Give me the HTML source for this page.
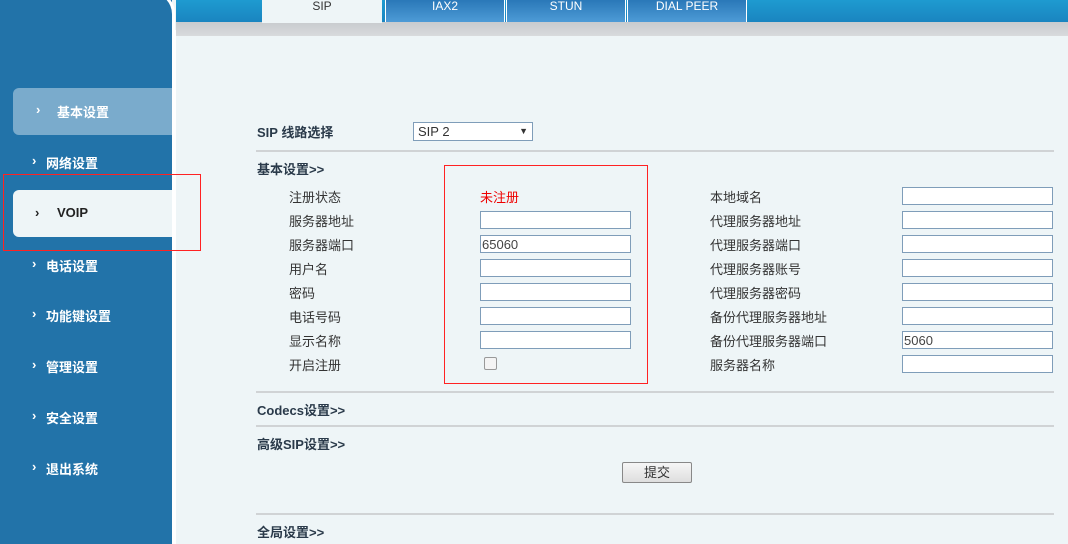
<!DOCTYPE html>
<html><head><meta charset="utf-8"><style>
body{margin:0;width:1068px;height:544px;overflow:hidden;background:#eef5f7;font-family:"Liberation Sans","Noto Sans CJK SC",sans-serif;font-size:13px;color:#333;position:relative}
.abs{position:absolute}
#side{left:0;top:0;width:172px;height:544px;background:#2273a9}
#topbar{left:176px;top:0;width:892px;height:22px;background:linear-gradient(#1e9bd0,#1a85c0)}
#gray{left:176px;top:22px;width:892px;height:14px;background:linear-gradient(#c8cbce,#d8dadc)}
.tab{top:0;height:22px;width:118px;text-align:center;font-size:12px;color:#fff;line-height:12px;background:linear-gradient(#2a78b8,#4d9bd6);border-left:1px solid #fff;border-right:1px solid #fff}
.nav{left:0;width:172px;color:#fff;font-weight:bold;font-size:13px}
.hr{left:256px;width:798px;height:2px;background:#d0d3d5}
.b{font-weight:bold;color:#2a3a4a}
input.t{position:absolute;width:148px;height:16px;border:1px solid #7f9db9;background:#fff;margin:0;padding:0 0 0 1px;font:13px "Liberation Sans",sans-serif;color:#444}
.l{position:absolute;font-size:13px;color:#333}
</style></head><body>
<div class="abs" id="topbar"></div>
<div class="abs" id="gray"></div>
<div class="abs tab" style="left:262px;background:#eef5f7;color:#333;border:none;width:120px;height:23px;padding-top:0">SIP</div>
<div class="abs tab" style="left:385px">IAX2</div>
<div class="abs tab" style="left:506px">STUN</div>
<div class="abs tab" style="left:627px">DIAL PEER</div>
<div class="abs" id="side"></div>
<div class="abs" style="left:140px;top:-10px;width:32px;height:48px;border-top-right-radius:24px;border-right:3px solid #fff;border-top:3px solid #fff"></div>
<div class="abs" style="left:172px;top:30px;width:4px;height:514px;background:#fff"></div>
<div class="abs" style="left:13px;top:88px;width:159px;height:47px;background:#7aabcc;border-radius:6px 0 0 6px"></div>
<div class="abs" style="left:13px;top:190px;width:159px;height:47px;background:#eef5f7;border-radius:6px 0 0 6px"></div>
<div class="abs" style="left:3px;top:174px;width:196px;height:75px;border:1px solid #f22"></div>
<div class="abs nav" style="top:102px"><span style="position:absolute;left:36px">›</span><span style="position:absolute;left:57px">基本设置</span></div>
<div class="abs nav" style="top:153px"><span style="position:absolute;left:32px">›</span><span style="position:absolute;left:46px">网络设置</span></div>
<div class="abs nav" style="top:205px;color:#222"><span style="position:absolute;left:35px">›</span><span style="position:absolute;left:57px">VOIP</span></div>
<div class="abs nav" style="top:256px"><span style="position:absolute;left:32px">›</span><span style="position:absolute;left:46px">电话设置</span></div>
<div class="abs nav" style="top:306px"><span style="position:absolute;left:32px">›</span><span style="position:absolute;left:46px">功能键设置</span></div>
<div class="abs nav" style="top:357px"><span style="position:absolute;left:32px">›</span><span style="position:absolute;left:46px">管理设置</span></div>
<div class="abs nav" style="top:408px"><span style="position:absolute;left:32px">›</span><span style="position:absolute;left:46px">安全设置</span></div>
<div class="abs nav" style="top:459px"><span style="position:absolute;left:32px">›</span><span style="position:absolute;left:46px">退出系统</span></div>

<div class="abs b" style="left:257px;top:122px">SIP 线路选择</div>
<div class="abs" style="left:413px;top:122px;width:118px;height:17px;border:1px solid #7f9db9;background:#fff;font-size:13px;line-height:17px;color:#333"><span style="margin-left:4px">SIP 2</span><span style="position:absolute;right:4px;font-size:9px">▼</span></div>
<div class="abs hr" style="top:150px"></div>
<div class="abs b" style="left:257px;top:159px">基本设置&gt;&gt;</div>
<div class="abs" style="left:444px;top:165px;width:202px;height:217px;border:1px solid #f22"></div>

<div class="l" style="left:289px;top:187px">注册状态</div><div class="l" style="left:480px;top:187px;color:#e00">未注册</div>
<div class="l" style="left:289px;top:211px">服务器地址</div><input class="t" style="left:480px;top:211px">
<div class="l" style="left:289px;top:235px">服务器端口</div><input class="t" style="left:480px;top:235px" value="65060">
<div class="l" style="left:289px;top:259px">用户名</div><input class="t" style="left:480px;top:259px">
<div class="l" style="left:289px;top:283px">密码</div><input class="t" style="left:480px;top:283px">
<div class="l" style="left:289px;top:307px">电话号码</div><input class="t" style="left:480px;top:307px">
<div class="l" style="left:289px;top:331px">显示名称</div><input class="t" style="left:480px;top:331px">
<div class="l" style="left:289px;top:355px">开启注册</div><div class="abs" style="left:484px;top:357px;width:11px;height:11px;border:1px solid #999;border-radius:2px;background:#f4f4f4"></div>

<div class="l" style="left:710px;top:187px">本地域名</div><input class="t" style="left:902px;top:187px">
<div class="l" style="left:710px;top:211px">代理服务器地址</div><input class="t" style="left:902px;top:211px">
<div class="l" style="left:710px;top:235px">代理服务器端口</div><input class="t" style="left:902px;top:235px">
<div class="l" style="left:710px;top:259px">代理服务器账号</div><input class="t" style="left:902px;top:259px">
<div class="l" style="left:710px;top:283px">代理服务器密码</div><input class="t" style="left:902px;top:283px">
<div class="l" style="left:710px;top:307px">备份代理服务器地址</div><input class="t" style="left:902px;top:307px">
<div class="l" style="left:710px;top:331px">备份代理服务器端口</div><input class="t" style="left:902px;top:331px" value="5060">
<div class="l" style="left:710px;top:355px">服务器名称</div><input class="t" style="left:902px;top:355px">

<div class="abs hr" style="top:391px"></div>
<div class="abs b" style="left:257px;top:400px">Codecs设置&gt;&gt;</div>
<div class="abs hr" style="top:425px"></div>
<div class="abs b" style="left:257px;top:434px">高级SIP设置&gt;&gt;</div>
<div class="abs" style="left:622px;top:462px;width:68px;height:19px;border:1px solid #888;border-radius:2px;background:linear-gradient(#f6f6f6,#dedede);text-align:center;line-height:19px;color:#333">提交</div>
<div class="abs hr" style="top:513px"></div>
<div class="abs b" style="left:257px;top:522px">全局设置&gt;&gt;</div>
</body></html>
